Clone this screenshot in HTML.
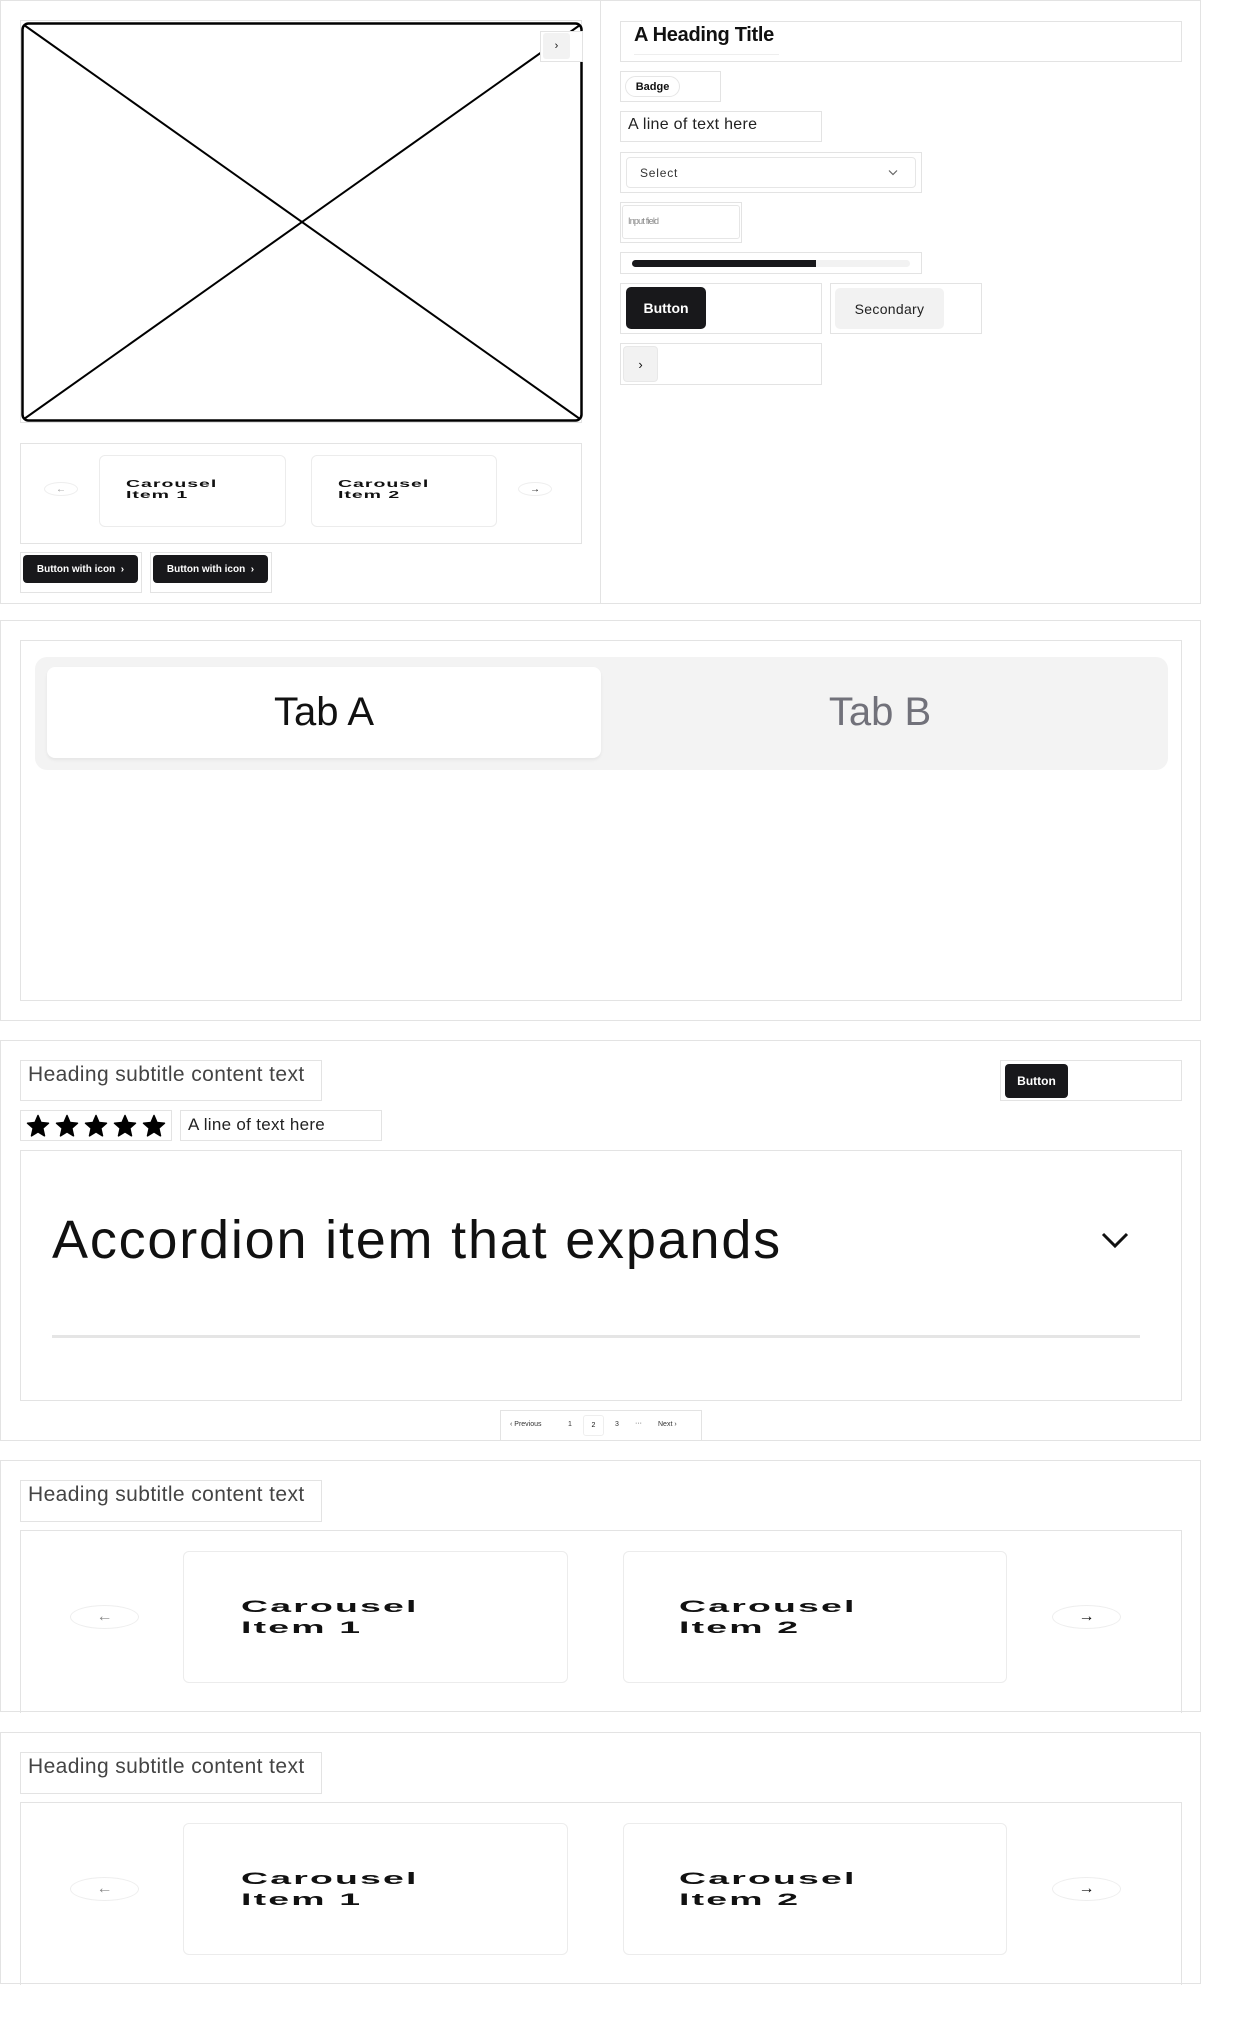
<!DOCTYPE html>
<html><head><meta charset="utf-8"><style>
*{box-sizing:border-box;margin:0;padding:0}
body{width:1250px;height:2030px;background:#fff;font-family:"Liberation Sans",sans-serif;position:relative;overflow:hidden;color:#111}
.a{position:absolute}
.b{position:absolute;border:1px solid #e3e3e3}
.btn{position:absolute;background:#18181b;color:#fff;border-radius:4px;display:flex;align-items:center;justify-content:center}
.card{position:absolute;border:1px solid #ececec;border-radius:6px;background:#fff}
.ct{position:absolute;font-weight:bold;color:#111;transform-origin:0 0;white-space:nowrap}
.cl{font-size:17px;letter-spacing:1px;line-height:21px;transform:scaleX(2.2)}
.cs{font-size:10px;letter-spacing:0.5px;line-height:11px;transform:scaleX(1.95)}
.circ{position:absolute;border:1px solid #eee;border-radius:50%;display:flex;align-items:center;justify-content:center;background:#fff}
.sub{position:absolute;font-size:21px;color:#444;letter-spacing:0.4px}
</style></head><body>

<!-- Section 1 -->
<div class="b" style="left:0;top:0;width:1201px;height:604px"></div>
<div class="a" style="left:600px;top:0;width:1px;height:604px;background:#e3e3e3"></div>
<div class="b" style="left:20px;top:20px;width:562px;height:403px"></div>
<svg class="a" style="left:21px;top:22px" width="562" height="400" viewBox="0 0 562 400">
<rect x="1.5" y="1.5" width="559" height="397" rx="6" fill="none" stroke="#000" stroke-width="2.5"/>
<line x1="3" y1="3" x2="559" y2="397" stroke="#000" stroke-width="2"/>
<line x1="3" y1="397" x2="559" y2="3" stroke="#000" stroke-width="2"/>
</svg>
<div class="b" style="left:540px;top:31px;width:43px;height:31px;background:#fff"></div>
<div class="a" style="left:543px;top:33px;width:27px;height:26px;background:#f2f2f2;border-radius:3px;font-size:11px;display:flex;align-items:center;justify-content:center">›</div>

<div class="b" style="left:20px;top:443px;width:562px;height:101px"></div>
<div class="circ" style="left:44px;top:482px;width:34px;height:14px;font-size:10px;color:#999">←</div>
<div class="card" style="left:99px;top:455px;width:187px;height:72px"></div>
<div class="ct cs" style="left:126px;top:479px">Carousel<br>Item 1</div>
<div class="card" style="left:311px;top:455px;width:186px;height:72px"></div>
<div class="ct cs" style="left:338px;top:479px">Carousel<br>Item 2</div>
<div class="circ" style="left:518px;top:482px;width:34px;height:14px;font-size:10px">→</div>

<div class="b" style="left:20px;top:552px;width:122px;height:41px"></div>
<div class="btn" style="left:23px;top:555px;width:115px;height:28px;font-size:10px;font-weight:bold">Button with icon &nbsp;›</div>
<div class="b" style="left:150px;top:552px;width:122px;height:41px"></div>
<div class="btn" style="left:153px;top:555px;width:115px;height:28px;font-size:10px;font-weight:bold">Button with icon &nbsp;›</div>

<div class="b" style="left:620px;top:21px;width:562px;height:41px"></div>
<div class="a" style="left:634px;top:24px;font-size:20px;font-weight:bold;letter-spacing:-0.3px">A Heading Title</div>
<div class="a" style="left:634px;top:54px;width:145px;height:1px;background:#eee"></div>
<div class="b" style="left:620px;top:71px;width:101px;height:31px"></div>
<div class="a" style="left:625px;top:76px;width:55px;height:21px;border:1px solid #e6e6e6;border-radius:11px;font-size:11px;font-weight:bold;display:flex;align-items:center;justify-content:center">Badge</div>
<div class="b" style="left:620px;top:111px;width:202px;height:31px"></div>
<div class="a" style="left:628px;top:116px;font-size:16px;color:#222;letter-spacing:0.3px">A line of text here</div>
<div class="b" style="left:620px;top:152px;width:302px;height:41px"></div>
<div class="a" style="left:626px;top:157px;width:290px;height:31px;border:1px solid #e6e6e6;border-radius:4px;font-size:12px;color:#333;letter-spacing:0.8px;padding:8px 0 0 13px">Select<svg style="position:absolute;right:17px;top:11px" width="10" height="7" viewBox="0 0 10 7"><path d="M1 1.5 L5 5.5 L9 1.5" fill="none" stroke="#666" stroke-width="1.2"/></svg></div>
<div class="b" style="left:620px;top:202px;width:122px;height:41px"></div>
<div class="a" style="left:622px;top:205px;width:118px;height:34px;border:1px solid #e6e6e6;border-radius:3px;font-size:9px;color:#888;padding:10px 0 0 5px;letter-spacing:-0.8px">Input field</div>
<div class="b" style="left:620px;top:252px;width:302px;height:22px"></div>
<div class="a" style="left:632px;top:260px;width:278px;height:7px;background:#f2f2f2;border-radius:4px"></div>
<div class="a" style="left:632px;top:260px;width:184px;height:7px;background:#18181b;border-radius:4px 0 0 4px"></div>
<div class="b" style="left:620px;top:283px;width:202px;height:51px"></div>
<div class="btn" style="left:626px;top:287px;width:80px;height:42px;font-size:14px;font-weight:bold;border-radius:5px">Button</div>
<div class="b" style="left:830px;top:283px;width:152px;height:51px"></div>
<div class="a" style="left:835px;top:288px;width:109px;height:41px;background:#f2f2f2;border-radius:5px;font-size:14px;color:#222;display:flex;align-items:center;justify-content:center;letter-spacing:0.3px">Secondary</div>
<div class="b" style="left:620px;top:343px;width:202px;height:42px"></div>
<div class="a" style="left:623px;top:346px;width:35px;height:36px;background:#f2f2f2;border:1px solid #e8e8e8;border-radius:4px;font-size:13px;display:flex;align-items:center;justify-content:center">›</div>

<!-- Section 2 -->
<div class="b" style="left:0;top:620px;width:1201px;height:401px"></div>
<div class="b" style="left:20px;top:640px;width:1162px;height:361px"></div>
<div class="a" style="left:35px;top:657px;width:1133px;height:113px;background:#f3f3f3;border-radius:12px"></div>
<div class="a" style="left:47px;top:667px;width:554px;height:91px;background:#fff;border-radius:8px;box-shadow:0 2px 3px rgba(0,0,0,0.06);font-size:40px;display:flex;align-items:center;justify-content:center">Tab A</div>
<div class="a" style="left:603px;top:667px;width:554px;height:91px;font-size:40px;color:#71717a;display:flex;align-items:center;justify-content:center">Tab B</div>

<!-- Section 3 -->
<div class="b" style="left:0;top:1040px;width:1201px;height:401px"></div>
<div class="b" style="left:20px;top:1060px;width:302px;height:41px"></div>
<div class="sub" style="left:28px;top:1063px">Heading subtitle content text</div>
<div class="b" style="left:1000px;top:1060px;width:182px;height:41px"></div>
<div class="btn" style="left:1005px;top:1064px;width:63px;height:34px;font-size:12px;border-radius:4px;font-weight:bold">Button</div>
<div class="b" style="left:20px;top:1110px;width:152px;height:31px"></div>
<svg class="a" style="left:24px;top:1114px" width="146" height="24" viewBox="0 0 146 24">
<defs><path id="st" d="M12 1.5 L15 8.5 L22.5 9.2 L16.8 14.2 L18.5 21.8 L12 17.8 L5.5 21.8 L7.2 14.2 L1.5 9.2 L9 8.5 Z" fill="#000" stroke="#000" stroke-width="1.5" stroke-linejoin="round"/></defs>
<use href="#st" x="2"/><use href="#st" x="31"/><use href="#st" x="60"/><use href="#st" x="89"/><use href="#st" x="118"/>
</svg>
<div class="b" style="left:180px;top:1110px;width:202px;height:31px"></div>
<div class="a" style="left:188px;top:1115px;font-size:17px;color:#222;letter-spacing:0.3px">A line of text here</div>
<div class="b" style="left:20px;top:1150px;width:1162px;height:251px"></div>
<div class="a" style="left:52px;top:1208px;font-size:54px;line-height:64px;color:#111;letter-spacing:1.8px">Accordion item that expands</div>
<svg class="a" style="left:1100px;top:1230px" width="30" height="20" viewBox="0 0 30 20"><path d="M3 4 L15 16 L27 4" fill="none" stroke="#111" stroke-width="3"/></svg>
<div class="a" style="left:52px;top:1335px;width:1088px;height:3px;background:#e5e5e5"></div>
<div class="b" style="left:500px;top:1410px;width:202px;height:31px"></div>
<div class="a" style="left:510px;top:1421px;font-size:7px;color:#333">‹ Previous</div>
<div class="a" style="left:568px;top:1421px;font-size:7px;color:#333">1</div>
<div class="a" style="left:583px;top:1415px;width:21px;height:21px;border:1px solid #eee;border-radius:3px;font-size:7px;text-align:center;line-height:19px">2</div>
<div class="a" style="left:615px;top:1421px;font-size:7px;color:#333">3</div>
<div class="a" style="left:635px;top:1420px;font-size:7px;color:#333">···</div>
<div class="a" style="left:658px;top:1421px;font-size:7px;color:#333">Next ›</div>

<!-- Section 4 -->
<div class="b" style="left:0;top:1460px;width:1201px;height:252px"></div>
<div class="b" style="left:20px;top:1480px;width:302px;height:42px"></div>
<div class="sub" style="left:28px;top:1483px">Heading subtitle content text</div>
<div class="b" style="left:20px;top:1530px;width:1162px;height:183px;border-bottom:none"></div>
<div class="circ" style="left:70px;top:1605px;width:69px;height:24px;font-size:16px;color:#888">←</div>
<div class="card" style="left:183px;top:1551px;width:385px;height:132px"></div>
<div class="ct cl" style="left:241px;top:1596px">Carousel<br>Item 1</div>
<div class="card" style="left:623px;top:1551px;width:384px;height:132px"></div>
<div class="ct cl" style="left:679px;top:1596px">Carousel<br>Item 2</div>
<div class="circ" style="left:1052px;top:1605px;width:69px;height:24px;font-size:16px">→</div>

<!-- Section 5 -->
<div class="b" style="left:0;top:1732px;width:1201px;height:252px"></div>
<div class="b" style="left:20px;top:1752px;width:302px;height:42px"></div>
<div class="sub" style="left:28px;top:1755px">Heading subtitle content text</div>
<div class="b" style="left:20px;top:1802px;width:1162px;height:183px;border-bottom:none"></div>
<div class="circ" style="left:70px;top:1877px;width:69px;height:24px;font-size:16px;color:#888">←</div>
<div class="card" style="left:183px;top:1823px;width:385px;height:132px"></div>
<div class="ct cl" style="left:241px;top:1868px">Carousel<br>Item 1</div>
<div class="card" style="left:623px;top:1823px;width:384px;height:132px"></div>
<div class="ct cl" style="left:679px;top:1868px">Carousel<br>Item 2</div>
<div class="circ" style="left:1052px;top:1877px;width:69px;height:24px;font-size:16px">→</div>

</body></html>
